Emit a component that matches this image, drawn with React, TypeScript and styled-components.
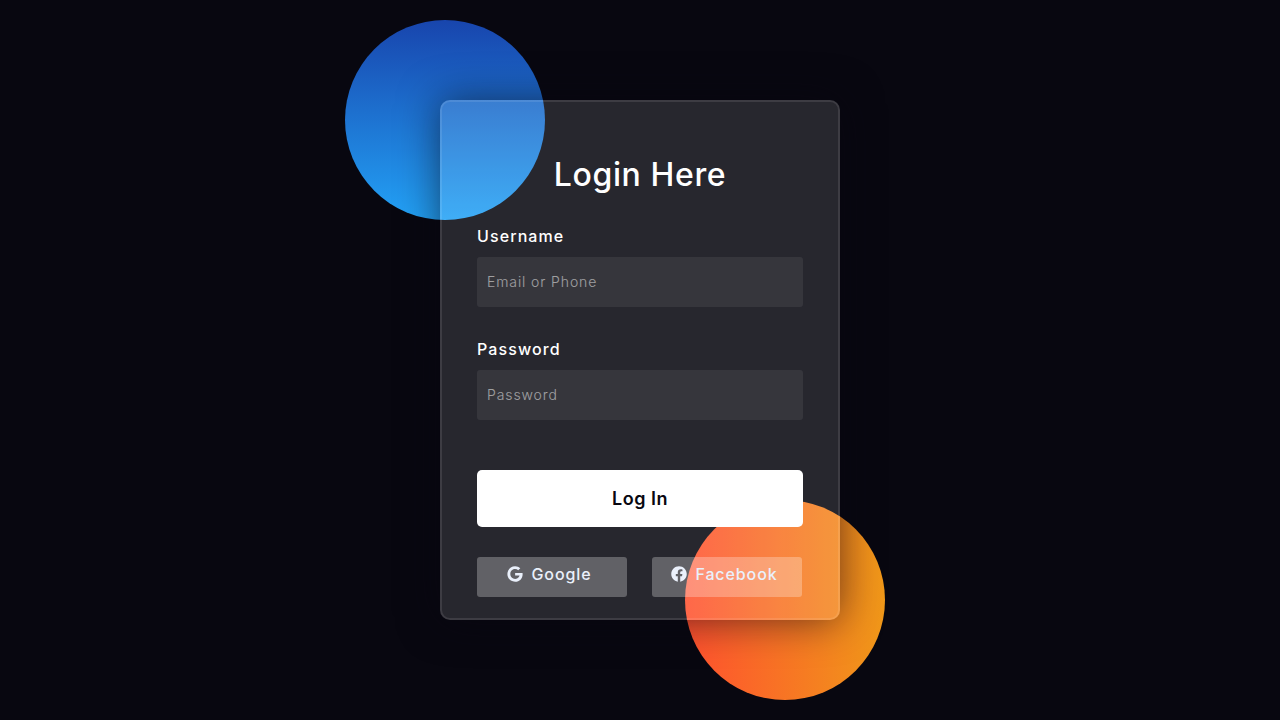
import styled, {createGlobalStyle} from "styled-components";
import {FaFacebook, FaGoogle} from "react-icons/fa";

const GlobalStyle = createGlobalStyle`
  *, *::before, *::after {
    box-sizing: border-box;
    margin: 0;
    padding: 0;
  }

  body {
    background-color: #080710;
    font-family: "Inter", "Liberation Sans", sans-serif;
  }
`

export default function App() {
    return (
        <>
            <GlobalStyle/>
            <StyledPage>
                <StyledStage>
                    <StyledShape $variant="blue"/>
                    <StyledShape $variant="orange"/>
                    <StyledForm onSubmit={(e) => e.preventDefault()}>
                        <StyledTitle>Login Here</StyledTitle>

                        <StyledLabel htmlFor="username">Username</StyledLabel>
                        <StyledInput type="text" id="username" placeholder="Email or Phone"/>

                        <StyledLabel htmlFor="password">Password</StyledLabel>
                        <StyledInput type="password" id="password" placeholder="Password"/>

                        <StyledSubmit type="submit">Log In</StyledSubmit>

                        <StyledSocial>
                            <StyledSocialButton type="button">
                                <FaGoogle size={16}/>
                                Google
                            </StyledSocialButton>
                            <StyledSocialButton type="button">
                                <FaFacebook size={16}/>
                                Facebook
                            </StyledSocialButton>
                        </StyledSocial>
                    </StyledForm>
                </StyledStage>
            </StyledPage>
        </>
    );
}

const StyledPage = styled.div`
  width: 100%;
  height: 720px;
  display: flex;
  align-items: center;
  justify-content: center;
  overflow: hidden;
`

const StyledStage = styled.div`
  position: relative;
  width: 430px;
  height: 520px;
  display: flex;
  justify-content: center;
`

const StyledShape = styled.div<{ $variant: "blue" | "orange" }>`
  position: absolute;
  width: 200px;
  height: 200px;
  border-radius: 50%;
  ${({$variant}) => $variant === "blue" ? `
    left: -80px;
    top: -80px;
    background: linear-gradient(#1845ad, #23a2f6);
  ` : `
    right: -30px;
    bottom: -80px;
    background: linear-gradient(to right, #ff512f, #f09819);
  `}
`

const StyledForm = styled.form`
  position: relative;
  width: 400px;
  height: 520px;
  padding: 50px 35px;
  background-color: rgba(255, 255, 255, 0.13);
  border: 2px solid rgba(255, 255, 255, 0.1);
  border-radius: 10px;
  box-shadow: 0 0 40px rgba(8, 7, 16, 0.6);
`

const StyledTitle = styled.h3`
  height: 42px;
  font-size: 32px;
  font-weight: 500;
  line-height: 45px;
  letter-spacing: 0.6px;
  text-align: center;
  color: #ffffff;
`

const StyledLabel = styled.label`
  display: block;
  margin-top: 30px;
  font-size: 16px;
  font-weight: 500;
  line-height: 24px;
  letter-spacing: 1.1px;
  color: #ffffff;
`

const StyledInput = styled.input`
  display: block;
  width: 100%;
  height: 50px;
  margin-top: 9px;
  padding: 0 10px 2px;
  background-color: rgba(255, 255, 255, 0.07);
  border: none;
  border-radius: 3px;
  outline: none;
  font-family: inherit;
  font-size: 14px;
  font-weight: 300;
  letter-spacing: 0.9px;
  color: #ffffff;

  &::placeholder {
    color: #e5e5e5;
    opacity: 0.6;
  }
`

const StyledSubmit = styled.button`
  display: block;
  width: 100%;
  height: 57px;
  margin-top: 50px;
  background-color: #ffffff;
  border: none;
  border-radius: 5px;
  font-family: inherit;
  font-size: 18px;
  font-weight: 600;
  letter-spacing: 0.5px;
  color: #080710;
  cursor: pointer;
`

const StyledSocial = styled.div`
  display: flex;
  gap: 25px;
  margin-top: 30px;
`

const StyledSocialButton = styled.button`
  width: 150px;
  height: 40px;
  display: flex;
  align-items: center;
  justify-content: center;
  gap: 8px;
  padding: 0 10px 6px 5px;
  background-color: rgba(255, 255, 255, 0.27);
  border: none;
  border-radius: 3px;
  font-family: inherit;
  font-size: 16px;
  font-weight: 500;
  letter-spacing: 0.9px;
  color: #eaf0fb;
`
